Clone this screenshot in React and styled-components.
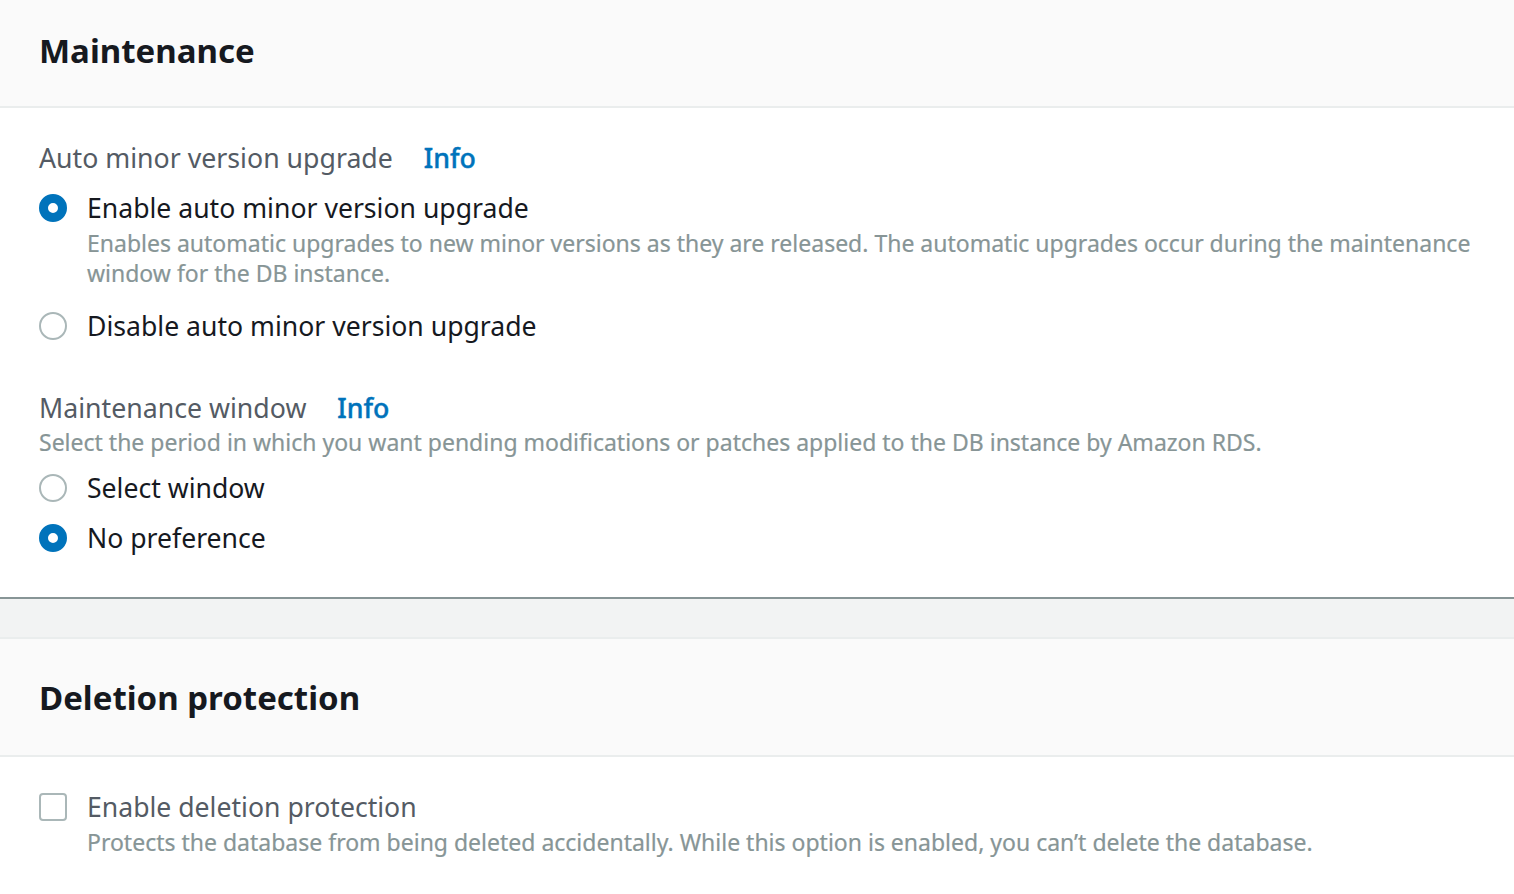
import React from "react";
import styled, { createGlobalStyle } from "styled-components";

const Global = createGlobalStyle`
  html, body { margin: 0; padding: 0; background: #f2f3f3; }
  body { font-family: "Noto Sans", "Open Sans", sans-serif; -webkit-font-smoothing: antialiased; }
`;

const Page = styled.div`
  width: 1514px;
  display: flex;
  flex-direction: column;
`;

const Card = styled.section`
  background: #ffffff;
  box-shadow: 0 2px 0 0 #879596;
  margin-bottom: ${(p) => (p.$gap ? "40px" : "0")};
  border-top: ${(p) => (p.$top ? "2px solid #eaeded" : "none")};
`;

const Header = styled.div`
  background: #fafafa;
  border-bottom: 2px solid #eaeded;
  height: ${(p) => p.$h}px;
  box-sizing: border-box;
  padding-left: 39px;
  padding-bottom: ${(p) => p.$pb || 0}px;
  display: flex;
  align-items: center;
`;

const Title = styled.h2`
  margin: 0;
  font-size: 33px;
  font-weight: 700;
  color: #16191f;
`;

const Body = styled.div`
  padding: ${(p) => p.$pad};
  display: flex;
  flex-direction: column;
`;

const FieldLabel = styled.div`
  display: flex;
  align-items: baseline;
  gap: 31px;
  font-size: 26.7px;
  line-height: 36px;
  color: #545b64;
  margin-top: ${(p) => p.$mt || 0}px;
`;

const InfoLink = styled.a`
  color: #0073bb;
  font-weight: 500;
  text-decoration: none;
  -webkit-text-stroke: 0.4px #0073bb;
`;

const Hint = styled.div`
  font-size: 23px;
  line-height: 30px;
  color: #879596;
  margin-top: ${(p) => p.$mt || 0}px;
  -webkit-text-stroke: 0.2px #879596;
`;

const Option = styled.label`
  display: grid;
  grid-template-columns: 48px 1fr;
  align-items: start;
  margin-top: ${(p) => p.$mt || 0}px;
`;

const Radio = styled.span`
  width: 28px;
  height: 28px;
  box-sizing: border-box;
  border-radius: 50%;
  margin-top: 4px;
  border: ${(p) => (p.$checked ? "9px solid #0073bb" : "2px solid #aab7b8")};
  background: #fff;
`;

const Check = styled.span`
  width: 28px;
  height: 28px;
  box-sizing: border-box;
  border-radius: 4px;
  margin-top: 4px;
  border: 2px solid #aab7b8;
  background: #fff;
`;

const OptText = styled.div`
  display: flex;
  flex-direction: column;
`;

const OptLabel = styled.span`
  font-size: 26.6px;
  line-height: 36px;
  color: ${(p) => p.$c || "#16191f"};
`;

export default function App() {
  return (
    <Page>
      <Global />
      <Card $gap>
        <Header $h={108} $pb={6}>
          <Title>Maintenance</Title>
        </Header>
        <Body $pad="32px 20px 41px 39px">
          <FieldLabel>
            <span>Auto minor version upgrade</span>
            <InfoLink href="#">Info</InfoLink>
          </FieldLabel>
          <Option $mt={14}>
            <Radio $checked />
            <OptText>
              <OptLabel>Enable auto minor version upgrade</OptLabel>
              <Hint $mt={2}>
                Enables automatic upgrades to new minor versions as they are released. The automatic upgrades occur during the maintenance window for the DB instance.
              </Hint>
            </OptText>
          </Option>
          <Option $mt={20}>
            <Radio />
            <OptText>
              <OptLabel>Disable auto minor version upgrade</OptLabel>
            </OptText>
          </Option>
          <FieldLabel $mt={46}>
            <span>Maintenance window</span>
            <InfoLink href="#">Info</InfoLink>
          </FieldLabel>
          <Hint $mt={1}>
            Select the period in which you want pending modifications or patches applied to the DB instance by Amazon RDS.
          </Hint>
          <Option $mt={13}>
            <Radio />
            <OptText>
              <OptLabel>Select window</OptLabel>
            </OptText>
          </Option>
          <Option $mt={14}>
            <Radio $checked />
            <OptText>
              <OptLabel>No preference</OptLabel>
            </OptText>
          </Option>
        </Body>
      </Card>
      <Card $top>
        <Header $h={118}>
          <Title>Deletion protection</Title>
        </Header>
        <Body $pad="32px 20px 40px 39px">
          <Option>
            <Check />
            <OptText>
              <OptLabel $c="#545b64">Enable deletion protection</OptLabel>
              <Hint $mt={2}>
                Protects the database from being deleted accidentally. While this option is enabled, you can’t delete the database.
              </Hint>
            </OptText>
          </Option>
        </Body>
      </Card>
    </Page>
  );
}
